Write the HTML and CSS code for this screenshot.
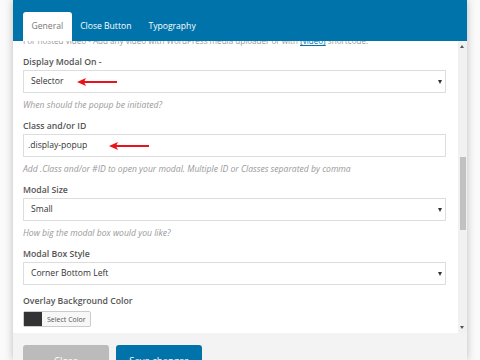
FILE: index.html
```html
<!DOCTYPE html>
<html lang="en">
<head>
    <meta charset="UTF-8">
    <title>Modal Settings</title>
    <link rel="stylesheet" href="styles.css">
</head>
<body>

<div class="modal">
    <div class="modal-header">
        <ul class="tabs">
            <li class="tab active">General</li>
            <li class="tab">Close Button</li>
            <li class="tab">Typography</li>
        </ul>
    </div>

    <div class="modal-body">
        <div class="content">
            <div class="intro-clip">
                <p class="intro">For hosted video - Add any video with WordPress media uploader or with <a href="#">[video]</a> shortcode.</p>
            </div>

            <div class="field">
                <label>Display Modal On -</label>
                <div class="select">
                    Selector
                    <svg class="pointer" width="40" height="8" viewBox="0 0 40 8"><path d="M2 4 L40 4" stroke="#e8141b" stroke-width="1.8"/><path d="M0 4 L9 0 L7 4 L9 8 Z" fill="#e8141b"/></svg>
                </div>
                <p class="help">When should the popup be initiated?</p>
            </div>

            <div class="field">
                <label>Class and/or ID</label>
                <div class="input">
                    .display-popup
                    <svg class="pointer pointer-2" width="40" height="8" viewBox="0 0 40 8"><path d="M2 4 L40 4" stroke="#e8141b" stroke-width="1.8"/><path d="M0 4 L9 0 L7 4 L9 8 Z" fill="#e8141b"/></svg>
                </div>
                <p class="help">Add .Class and/or #ID to open your modal. Multiple ID or Classes separated by comma</p>
            </div>

            <div class="field">
                <label>Modal Size</label>
                <div class="select">Small</div>
                <p class="help">How big the modal box would you like?</p>
            </div>

            <div class="field no-help">
                <label>Modal Box Style</label>
                <div class="select">Corner Bottom Left</div>
            </div>

            <div class="field">
                <label>Overlay Background Color</label>
                <div class="color-btn">
                    <span class="swatch"></span>
                    <span class="color-text">Select Color</span>
                </div>
            </div>
        </div>

        <div class="scrollbar">
            <span class="arrow-up"></span>
            <span class="thumb"></span>
            <span class="arrow-down"></span>
        </div>
    </div>

    <div class="modal-footer">
        <button class="btn btn-close">Close</button>
        <button class="btn btn-save">Save changes</button>
    </div>
</div>

</body>
</html>
```

FILE: styles.css
```css
* {
    box-sizing: border-box;
}

body {
    margin: 0;
    height: 360px;
    overflow: hidden;
    background: #fafafa;
    font-family: 'Open Sans', 'Liberation Sans', sans-serif;
    color: #555;
}

.modal {
    margin-left: 13px;
    width: 454px;
    height: 360px;
    background: #fff;
    display: flex;
    flex-direction: column;
    box-shadow: 0 0 8px rgba(0, 0, 0, 0.25);
}

/* header + tabs */
.modal-header {
    height: 41px;
    background: #0073aa;
    display: flex;
    align-items: flex-end;
    padding-left: 10px;
}

.tabs {
    list-style: none;
    margin: 0;
    padding: 0;
    display: flex;
}

.tab {
    height: 29px;
    padding: 0 8.5px;
    line-height: 29px;
    font-size: 8.6px;
    color: #fff;
}

.tab.active {
    background: #fff;
    color: #777;
    border-radius: 3px 3px 0 0;
}

/* body */
.modal-body {
    flex: 1;
    display: flex;
    overflow: hidden;
}

.content {
    width: 445px;
    padding: 0 12px 0 10px;
    overflow: hidden;
}

.intro-clip {
    height: 5px;
    overflow: hidden;
    display: flex;
    align-items: flex-end;
    margin-bottom: 8px;
}

.intro {
    margin: 0 0 -1px;
    font-size: 8.1px;
    line-height: 12px;
    color: #999;
    white-space: nowrap;
}

.intro a {
    color: #0073aa;
}

.field {
    margin-bottom: 6px;
}

.field.no-help {
    margin-bottom: 8px;
}

label {
    display: block;
    font-size: 8.7px;
    font-weight: 600;
    line-height: 16px;
}

.select, .input {
    position: relative;
    height: 23px;
    border: 1px solid #ddd;
    padding: 0 7px;
    font-size: 8.6px;
    line-height: 21px;
    color: #333;
}

.input {
    padding-left: 4px;
}

.select::after {
    content: "";
    position: absolute;
    right: 3px;
    top: 9px;
    border-left: 2.5px solid transparent;
    border-right: 2.5px solid transparent;
    border-top: 4px solid #333;
}

.pointer {
    position: absolute;
    left: 53px;
    top: 7px;
}

.pointer-2 {
    left: 85px;
}

.help {
    margin: 5px 0 0;
    font-size: 8.6px;
    line-height: 14px;
    font-style: italic;
    color: #999;
}

.color-btn {
    display: inline-flex;
    align-items: center;
    height: 16px;
    border: 1px solid #ccc;
    border-radius: 2px;
    background: #f7f7f7;
}

.swatch {
    width: 18px;
    height: 14px;
    background: #333;
}

.color-text {
    padding: 0 4px 0 5px;
    font-size: 7px;
    color: #555;
}

/* fake scrollbar */
.scrollbar {
    width: 9px;
    background: #f1f1f1;
    position: relative;
}

.arrow-up, .arrow-down {
    position: absolute;
    left: 2px;
    border-left: 2.5px solid transparent;
    border-right: 2.5px solid transparent;
}

.arrow-up {
    top: 4px;
    border-bottom: 3px solid #555;
}

.arrow-down {
    bottom: 4px;
    border-top: 3px solid #555;
}

.thumb {
    position: absolute;
    left: 2px;
    right: 1px;
    top: 116px;
    height: 73px;
    background: #c1c1c1;
}

/* footer */
.modal-footer {
    height: 27px;
    background: #f3f3f3;
    padding: 12px 0 0 10px;
    display: flex;
    gap: 7px;
    overflow: hidden;
}

.btn {
    height: 30px;
    border: none;
    border-radius: 3px;
    font-family: 'Open Sans', 'Liberation Sans', sans-serif;
    font-size: 9.5px;
    color: #fff;
    padding: 0;
}

.btn-close {
    width: 86px;
    background: #bbb;
}

.btn-save {
    width: 86px;
    background: #0073aa;
}
```
